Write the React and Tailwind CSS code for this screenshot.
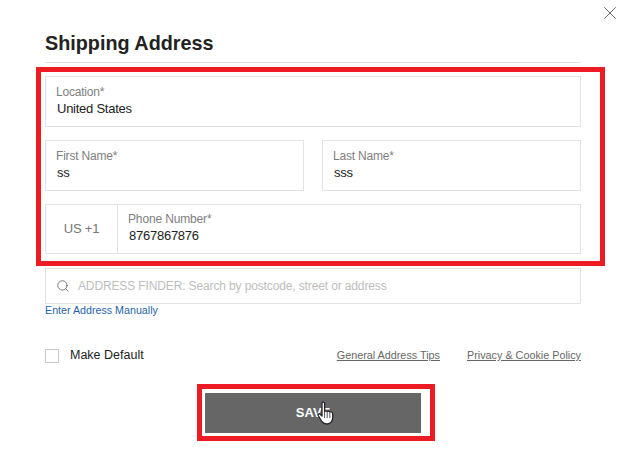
import { X, Search } from 'lucide-react'

function Field({ label, value, className = '' }) {
  return (
    <div className={`h-[51px] border border-[#e3e3e3] pl-[10px] pt-[7px] ${className}`}>
      <p className="text-[12px] leading-[16px] tracking-[-0.2px] text-[#808080]">{label}</p>
      <p className="pl-px text-[13px] leading-[18px] tracking-[-0.25px] text-[#222]">{value}</p>
    </div>
  )
}

function HandCursor() {
  return (
    <svg className="absolute left-[112px] top-[8px]" width="20" height="25" viewBox="0 0 20 25">
      <path
        d="M5 2c0-1.300 2.600-1.300 2.600 0v8.500c.4-1 2.400-.9 2.600.3.400-.9 2.400-.8 2.600.4.500-.7 2.500-.5 2.700.9.500 2.200.3 4.600-.1 6.300-.6 2.500-2.200 4.600-5.400 4.600-2.600 0-4-.9-5.200-2.500L1.200 14.500c-.7-1.200.8-2.300 1.900-1.300L5 15z"
        fill="#fff"
        stroke="#23232f"
        strokeWidth="1.300"
        strokeLinejoin="round"
      />
      <path d="M7.600 11v6M10.200 11.500v5.500M12.800 12v5" stroke="#23232f" strokeWidth="0.8" fill="none" />
    </svg>
  )
}

export default function App() {
  return (
    <div className="relative h-[454px] w-[624px] overflow-hidden bg-white pl-[45px] pr-[43px] pt-[31px] font-['Liberation_Sans',Arial,sans-serif]">
      <button className="absolute right-[3px] top-[2px] text-[#333]">
        <X size={22} strokeWidth={0.8} />
      </button>

      <h1 className="h-[31px] text-[19.8px] leading-[24px] font-bold text-[#222]">Shipping Address</h1>
      <div className="h-px bg-[#e3e3e3]" />

      <div className="-ml-[9px] -mr-[24px] mt-[4px] flex h-[199px] flex-col gap-[13px] border-[5px] border-[#ed1c24] pl-[4px] pr-[19px] pt-[4px]">
        <Field label="Location*" value="United States" />
        <div className="flex gap-[18px]">
          <Field label="First Name*" value="ss" className="flex-1" />
          <Field label="Last Name*" value="sss" className="flex-1" />
        </div>
        <div className="flex h-[50px] border border-[#e3e3e3]">
          <div className="flex w-[72px] items-center justify-center border-r border-[#e3e3e3] text-[13px] tracking-[-0.2px] text-[#777]">US +1</div>
          <div className="flex-1 pl-[10px] pt-[6px]">
            <p className="text-[12px] leading-[16px] tracking-[-0.15px] text-[#808080]">Phone Number*</p>
            <p className="pl-px text-[13px] leading-[18px] tracking-[-0.25px] text-[#222]">8767867876</p>
          </div>
        </div>
      </div>

      <div className="mt-[2px] flex h-[36px] items-center border border-[#e3e3e3] pl-[10px]">
        <Search size={14} strokeWidth={1.2} className="text-[#444]" />
        <span className="ml-[8px] text-[12px] tracking-[-0.13px] text-[#bdbdbd]">ADDRESS FINDER: Search by postcode, street or address</span>
      </div>
      <a className="block text-[10.7px] leading-[13px] text-[#1f64a8]">Enter Address Manually</a>

      <div className="mt-[30px] flex h-[16px] items-center">
        <span className="mt-[2px] h-[14px] w-[14px] border border-[#c8c8c8]" />
        <span className="ml-[11px] text-[12.5px] text-[#222]">Make Default</span>
        <a className="ml-auto text-[10.8px] text-[#666] underline">General Address Tips</a>
        <a className="ml-[27px] text-[10.8px] text-[#666] underline">Privacy &amp; Cookie Policy</a>
      </div>

      <div className="mt-[21px] pl-[152px]">
        <div className="w-[238px] border-[5px] border-[#ed1c24] pb-[3px] pl-[3px] pr-[9px] pt-[4px]">
          <button className="relative block h-[40px] w-[216px] bg-[#666] text-[13px] font-bold text-white">
            SAVE
            <HandCursor />
          </button>
        </div>
      </div>
    </div>
  )
}
